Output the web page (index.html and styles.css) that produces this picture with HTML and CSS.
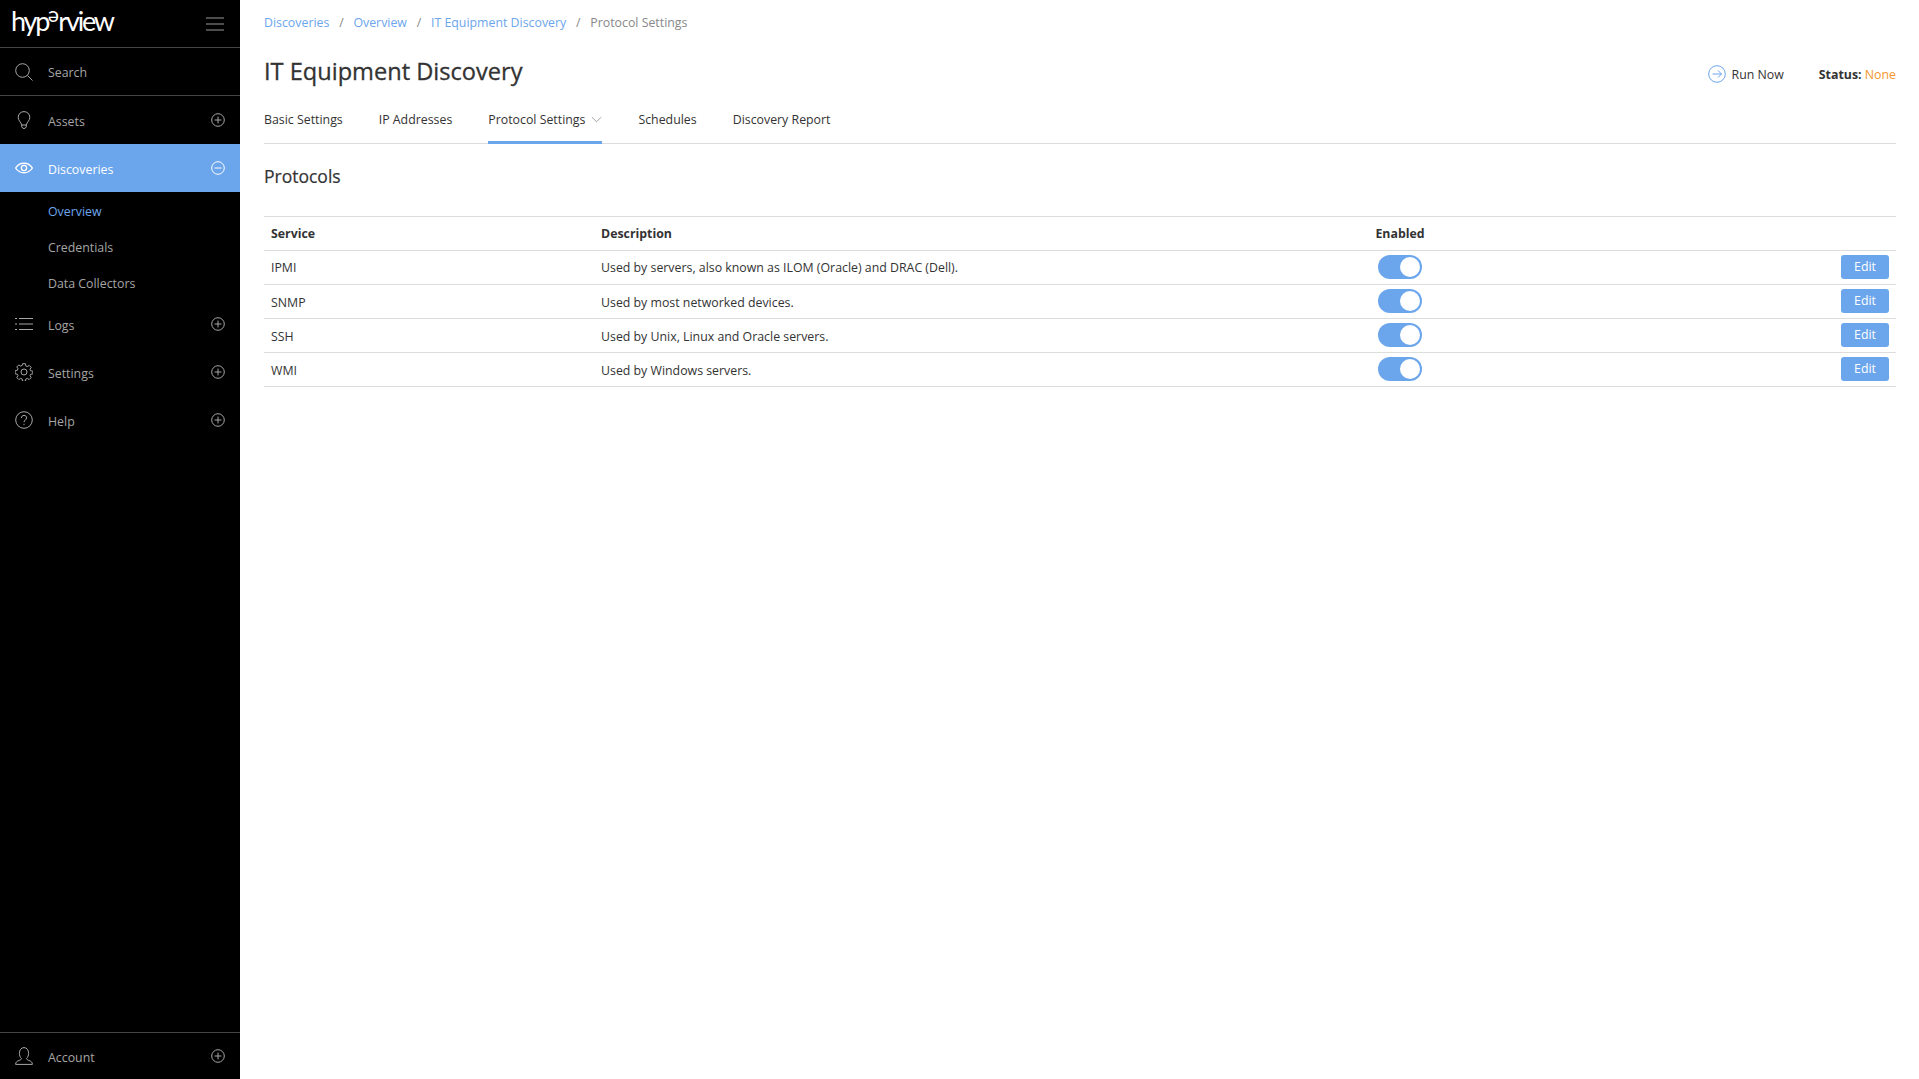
FILE: index.html
```html
<!DOCTYPE html>
<html lang="en">
<head>
  <meta charset="UTF-8">
  <meta name="viewport" content="width=device-width, initial-scale=1.0">
  <title>IT Equipment Discovery</title>
  <link rel="stylesheet" href="styles.css">
</head>
<body>
  <svg class="defs" width="0" height="0">
    <symbol id="plus" viewBox="0 0 14 14"><circle cx="7" cy="7" r="6.3"/><path d="M7 3.6v6.8M3.6 7h6.8"/></symbol>
    <symbol id="minus" viewBox="0 0 14 14"><circle cx="7" cy="7" r="6.3"/><path d="M3.6 7h6.8"/></symbol>
  </svg>

  <aside class="sidebar">
    <div class="brand">
      <span class="logo">hyp<span class="logo-e">e</span>rview</span>
      <svg class="burger" viewBox="0 0 18 14"><path d="M0 1h18M0 7h18M0 13h18"/></svg>
    </div>
    <div class="nav-item search-item">
      <svg class="nav-icon" viewBox="0 0 18 18"><circle cx="7.5" cy="7.5" r="6.8"/><path d="M12.5 12.5l5 5"/></svg>
      <span class="nav-label">Search</span>
    </div>
    <nav class="nav">
      <div class="nav-item">
        <svg class="nav-icon" viewBox="0 0 18 18"><path d="M6.6 14c0-2.6-3.4-4-3.4-7.700C3.200 3 5.800.6 9 .6s5.800 2.400 5.800 5.700c0 3.700-3.400 5.100-3.400 7.700zM6.800 14v2l1.200 1.400h2l1.200-1.400v-2"/></svg>
        <span class="nav-label">Assets</span>
        <svg class="toggle-icon"><use href="#plus"/></svg>
      </div>
      <div class="nav-item active">
        <svg class="nav-icon eye" viewBox="0 0 18 18"><path d="M.6 9C2.600 5.800 5.500 4.200 9 4.200s6.400 1.600 8.400 4.800c-2 3.200-4.900 4.800-8.400 4.800S2.600 12.200.6 9z"/><circle cx="9" cy="9" r="2.600"/></svg>
        <span class="nav-label">Discoveries</span>
        <svg class="toggle-icon"><use href="#minus"/></svg>
      </div>
      <a class="sub-item current">Overview</a>
      <a class="sub-item">Credentials</a>
      <a class="sub-item">Data Collectors</a>
      <div class="nav-item">
        <svg class="nav-icon" viewBox="0 0 18 18"><path d="M4 3.500h14M4 9h14M4 14.500h14M0 3.500h2M0 9h2M0 14.500h2"/></svg>
        <span class="nav-label">Logs</span>
        <svg class="toggle-icon"><use href="#plus"/></svg>
      </div>
      <div class="nav-item">
        <svg class="nav-icon" viewBox="0 0 18 18"><circle cx="9" cy="9" r="3"/><path d="M7.600.7h2.800l.4 2.200 1.500.7 1.900-1.200 2 2-1.200 1.900.7 1.500 2.200.4v2.600l-2.200.4-.7 1.500 1.200 1.900-2 2-1.900-1.200-1.500.7-.4 2.200H7.600l-.4-2.200-1.500-.7-1.900 1.200-2-2 1.200-1.900-.7-1.500-2.200-.4V7.700l2.200-.4.7-1.500-1.200-1.900 2-2 1.900 1.200 1.500-.7z"/></svg>
        <span class="nav-label">Settings</span>
        <svg class="toggle-icon"><use href="#plus"/></svg>
      </div>
      <div class="nav-item">
        <svg class="nav-icon" viewBox="0 0 18 18"><circle cx="9" cy="9" r="8.300"/><path d="M6.400 7c0-1.500 1.100-2.600 2.600-2.600s2.600 1 2.600 2.400c0 2.100-2.600 2.200-2.600 4.400M9 12.800v1.200"/></svg>
        <span class="nav-label">Help</span>
        <svg class="toggle-icon"><use href="#plus"/></svg>
      </div>
    </nav>
    <div class="nav-item account-item">
      <svg class="nav-icon" viewBox="0 0 18 18"><path d="M.6 17.400h16.800c0-2.300-1.500-3.300-3.600-4-1.500-.5-2.200-1-2.200-2 1.300-1.200 2-3 2-5C13.600 3 11.800.6 9 .6S4.400 3 4.400 6.400c0 2 .7 3.800 2 5 0 1-.7 1.500-2.200 2-2.100.7-3.600 1.700-3.600 4z"/></svg>
      <span class="nav-label">Account</span>
      <svg class="toggle-icon"><use href="#plus"/></svg>
    </div>
  </aside>

  <main class="main">
    <div class="breadcrumb">
      <a>Discoveries</a><span class="sep">/</span>
      <a>Overview</a><span class="sep">/</span>
      <a>IT Equipment Discovery</a><span class="sep">/</span>
      <span class="crumb-current">Protocol Settings</span>
    </div>

    <div class="title-row">
      <h1>IT Equipment Discovery</h1>
      <div class="run-now">
        <svg class="run-icon" viewBox="0 0 18 18"><circle cx="9" cy="9" r="8.300"/><path d="M4.500 9h9M10 5.500L13.500 9 10 12.500"/></svg>
        <span>Run Now</span>
      </div>
      <div class="status"><b>Status:</b> <span class="status-value">None</span></div>
    </div>

    <div class="tabs">
      <a class="tab">Basic Settings</a>
      <a class="tab">IP Addresses</a>
      <a class="tab selected">Protocol Settings
        <svg class="chevron" viewBox="0 0 12 7"><path d="M1 1l5 5 5-5"/></svg>
      </a>
      <a class="tab">Schedules</a>
      <a class="tab">Discovery Report</a>
    </div>

    <h2>Protocols</h2>

    <table class="protocols">
      <thead>
        <tr>
          <th class="col-service">Service</th>
          <th class="col-desc">Description</th>
          <th class="col-enabled">Enabled</th>
          <th></th>
        </tr>
      </thead>
      <tbody>
        <tr>
          <td>IPMI</td>
          <td>Used by servers, also known as ILOM (Oracle) and DRAC (Dell).</td>
          <td class="col-enabled"><span class="switch"></span></td>
          <td class="col-action"><button class="edit">Edit</button></td>
        </tr>
        <tr>
          <td>SNMP</td>
          <td>Used by most networked devices.</td>
          <td class="col-enabled"><span class="switch"></span></td>
          <td class="col-action"><button class="edit">Edit</button></td>
        </tr>
        <tr>
          <td>SSH</td>
          <td>Used by Unix, Linux and Oracle servers.</td>
          <td class="col-enabled"><span class="switch"></span></td>
          <td class="col-action"><button class="edit">Edit</button></td>
        </tr>
        <tr>
          <td>WMI</td>
          <td>Used by Windows servers.</td>
          <td class="col-enabled"><span class="switch"></span></td>
          <td class="col-action"><button class="edit">Edit</button></td>
        </tr>
      </tbody>
    </table>
  </main>
</body>
</html>
```

FILE: styles.css
```css
* {
  margin: 0;
  padding: 0;
  box-sizing: border-box;
}
body {
  font-family: "Open Sans", "Noto Sans", sans-serif;
  font-size: 12.35px;
  color: #333;
  background: #fff;
  display: flex;
  height: 100vh;
  overflow: hidden;
}
.defs {
  position: absolute;
}

/* sidebar */
.sidebar {
  width: 240px;
  flex: none;
  background: #000;
  color: #a6a6a6;
  display: flex;
  flex-direction: column;
}
.brand {
  height: 48px;
  display: flex;
  align-items: center;
  justify-content: space-between;
  padding: 0 16px 6px 11px;
  border-bottom: 1px solid #444;
}
.logo {
  font-family: "Lato", sans-serif;
  font-size: 27px;
  line-height: 1;
  letter-spacing: -2.2px;
  color: #fff;
}
.logo-e {
  display: inline-block;
  font-size: 21px;
  letter-spacing: 0;
  margin: 0 -1px 0 0;
  transform: rotate(180deg) translateY(3px);
}
.burger {
  width: 18px;
  height: 14px;
  margin-top: 6px;
  fill: none;
  stroke: #999;
  stroke-width: 1;
}
.nav {
  flex: 1;
}
.nav-item {
  height: 48px;
  display: flex;
  align-items: center;
  padding: 0 15px;
}
.search-item {
  border-bottom: 1px solid #444;
}
.account-item {
  height: 47px;
  border-top: 1px solid #444;
}
.nav-icon {
  width: 18px;
  height: 18px;
  flex: none;
  fill: none;
  stroke: #a6a6a6;
  stroke-width: 1;
  margin-right: 15px;
}
.nav-icon.eye {
  stroke-width: 1.4;
}
.nav-label {
  flex: 1;
  padding-top: 2px;
}
.toggle-icon {
  width: 14px;
  height: 14px;
  flex: none;
  fill: none;
  stroke: #a6a6a6;
  stroke-width: 1;
}
.nav-item.active {
  background: #6ba5ec;
  color: #fff;
}
.active .nav-icon,
.active .toggle-icon {
  stroke: #fff;
}
.sub-item {
  display: flex;
  align-items: center;
  height: 36px;
  padding: 2px 0 0 48px;
}
.sub-item.current {
  color: #6ba5ec;
}

/* main */
.main {
  flex: 1;
  min-width: 0;
  padding: 0 23px 0 24px;
}
.breadcrumb {
  height: 44px;
  display: flex;
  align-items: center;
  color: #6ba5ec;
}
.sep {
  color: #888;
  margin: 0 9.75px;
}
.crumb-current {
  color: #888;
}
.title-row {
  height: 52px;
  display: flex;
  align-items: center;
}
h1 {
  flex: 1;
  font-size: 23.6px;
  font-weight: 400;
  padding-top: 2px;
  -webkit-text-stroke: 0.3px #333;
}
.run-now {
  display: flex;
  align-items: center;
  margin-top: 8px;
}
.run-icon {
  width: 18px;
  height: 18px;
  margin-right: 6px;
  fill: none;
  stroke: #6ba5ec;
  stroke-width: 1;
}
.status {
  margin: 8px 0 0 35px;
}
.status-value {
  color: #f5962a;
}
.tabs {
  height: 48px;
  display: flex;
  gap: 36px;
  border-bottom: 1px solid #ddd;
}
.tab {
  display: flex;
  align-items: center;
  height: 48px;
  padding-bottom: 1px;
}
.tab.selected {
  border-bottom: 3px solid #6ba5ec;
  padding-top: 2px;
}
.chevron {
  width: 11px;
  height: 7px;
  margin-left: 6px;
  fill: none;
  stroke: #999;
  stroke-width: 1;
}
h2 {
  font-size: 17.5px;
  font-weight: 400;
  line-height: 24px;
  margin: 20px 0 28px;
  -webkit-text-stroke: 0.2px #333;
}

/* table */
.protocols {
  width: 100%;
  border-collapse: collapse;
  table-layout: fixed;
  border-top: 1px solid #ddd;
}
.protocols tr {
  border-bottom: 1px solid #ddd;
}
.protocols th {
  height: 34px;
  text-align: left;
  padding: 0 7px;
  font-weight: 700;
}
.protocols td {
  height: 34px;
  padding: 1px 7px 0;
}
.protocols tbody tr:first-child td {
  padding-top: 0;
}
.col-service {
  width: 330px;
}
.col-desc {
  width: 775px;
}
.protocols .col-enabled {
  width: 62px;
  text-align: center;
  padding: 0;
}
.protocols td.col-action {
  text-align: right;
  padding-top: 0;
}
.switch {
  display: block;
  position: relative;
  width: 44px;
  height: 24px;
  margin: -2px auto 0;
  border-radius: 12px;
  background: #6ba5ec;
}
.switch::after {
  content: "";
  position: absolute;
  top: 2px;
  right: 2px;
  width: 20px;
  height: 20px;
  border-radius: 50%;
  background: #fff;
}
.edit {
  display: block;
  width: 48px;
  height: 24px;
  margin: -2px 0 0 auto;
  border: none;
  border-radius: 3px;
  background: #6ba5ec;
  color: #fff;
  font: inherit;
}
```
